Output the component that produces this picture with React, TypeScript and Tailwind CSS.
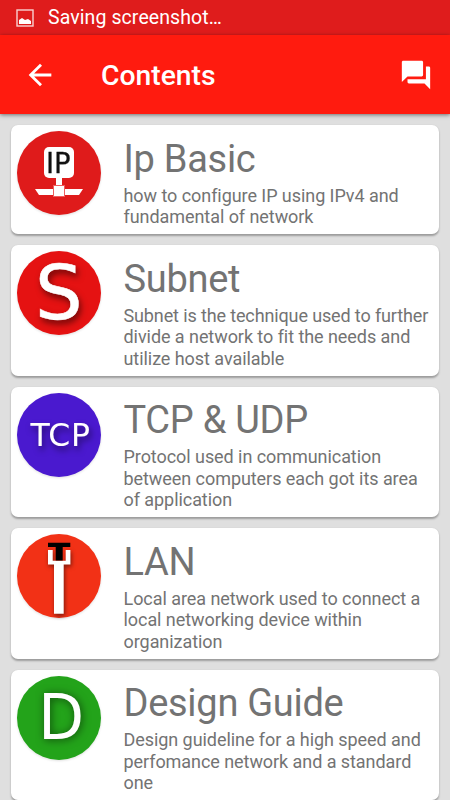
import type { ReactNode } from "react";

function Disc({ color, children }: { color: string; children: ReactNode }) {
  return (
    <svg viewBox="0 0 84 84" className="h-[84px] w-[84px] shrink-0 overflow-visible drop-shadow-[0_1px_1px_rgba(0,0,0,0.12)]">
      <circle cx="42" cy="42" r="42" fill={color} />
      {children}
    </svg>
  );
}

const letterShadow = "[filter:drop-shadow(2px_4px_3px_rgba(0,0,0,0.5))]";

const topics = [
  {
    title: "Ip Basic",
    lines: ["how to configure IP using IPv4 and", "fundamental of network"],
    icon: (
      <Disc color="#df1b1b">
        <rect x="27" y="16" width="30" height="31" rx="5" fill="#fff" />
        <rect x="39" y="46" width="6" height="10" fill="#fff" />
        <path d="M18 58h48l-4 6H22z" fill="#fff" />
        <rect x="36.5" y="54.5" width="11" height="11" fill="#fff" stroke="#ee5f5f" strokeWidth="1" />
        <text x="29" y="42" fontSize="27.5" fill="#111" stroke="#111" strokeWidth=".3" className="font-['DejaVu_Sans',sans-serif]">IP</text>
      </Disc>
    ),
  },
  {
    title: "Subnet",
    lines: ["Subnet is the technique used to further", "divide a network to fit the needs and", "utilize host available"],
    icon: (
      <Disc color="#e51212">
        <g className={letterShadow}>
          <text x="18" y="67.7" fontSize="75" fill="#fff" stroke="#fff" strokeWidth=".5" className="font-['DejaVu_Sans',sans-serif]">S</text>
        </g>
      </Disc>
    ),
  },
  {
    title: "TCP & UDP",
    lines: ["Protocol used in communication", "between computers each got its area", "of application"],
    icon: (
      <Disc color="#4a19cf">
        <g className={letterShadow}>
          <text x="13.4" y="53" fontSize="31.5" textLength="59.5" fill="#fff" className="font-['DejaVu_Sans',sans-serif]">TCP</text>
        </g>
      </Disc>
    ),
  },
  {
    title: "LAN",
    lines: ["Local area network used to connect a", "local networking device within", "organization"],
    icon: (
      <Disc color="#f23116">
        <g className="[filter:drop-shadow(1px_2px_2px_rgba(0,0,0,0.5))]">
          <path d="M31 16h4.7v10.8h13V16h4.7v14.4h-6.7v49.3H37V30.4h-6z" fill="#fff" />
        </g>
        <path d="M31 8.8h22.3v4.2h-7.6v13.4h-7V13H31z" fill="#000" />
      </Disc>
    ),
  },
  {
    title: "Design Guide",
    lines: ["Design guideline for a high speed and", "perfomance network and a standard", "one"],
    icon: (
      <Disc color="#23a31a">
        <g className="[filter:drop-shadow(1px_1px_4px_rgba(0,0,0,0.55))]">
          <text x="21.2" y="62.5" fontSize="63" textLength="45.8" lengthAdjust="spacingAndGlyphs" fill="#fff" className="font-['DejaVu_Sans',sans-serif]">D</text>
        </g>
      </Disc>
    ),
  },
];

export default function App() {
  return (
    <div className="flex h-[800px] w-[450px] flex-col overflow-hidden bg-[#dfdfdf] font-[Roboto,sans-serif]">
      <div className="flex h-[35px] shrink-0 items-center bg-[#df1c1c] pl-4 text-white">
        <svg viewBox="0 0 18 18" className="h-[18px] w-[18px]">
          <rect x="1" y="1" width="16" height="16" fill="none" stroke="#fff" strokeOpacity=".8" strokeWidth="1.4" />
          <path d="M3 15v-4l3-2 3 2 3-1 3 2v3z" fill="#fff" />
        </svg>
        <span className="ml-[14px] text-[19.5px] leading-[34px] tracking-[0.09px]">Saving screenshot…</span>
      </div>
      <header className="relative flex h-[79px] shrink-0 items-center bg-[#ff1b0f] text-white shadow-[0_1px_4px_rgba(0,0,0,0.5)]">
        <svg viewBox="0 0 24 24" className="ml-[23px] h-[34px] w-[34px]" fill="#fff">
          <path d="M20 11H7.83l5.59-5.59L12 4l-8 8 8 8 1.41-1.41L7.83 13H20v-2z" />
        </svg>
        <h1 className="ml-[44px] pt-[3px] text-[28.3px] leading-8 font-medium">Contents</h1>
        <svg viewBox="0 0 24 24" className="mr-[17px] ml-auto h-[34px] w-[34px]" fill="#fff">
          <path d="M21 6h-2v9H6v2c0 .55.45 1 1 1h11l4 4V7c0-.55-.45-1-1-1zm-4 6V3c0-.55-.45-1-1-1H3c-.55 0-1 .45-1 1v14l4-4h10c.55 0 1-.45 1-1z" />
        </svg>
      </header>
      <main className="flex flex-col gap-[11px] pt-[11.2px] pr-[11.5px] pl-[11px]">
        {topics.map((t) => (
          <article key={t.title} className="flex shrink-0 rounded-[7px] bg-white pt-[6px] pb-[6.5px] pl-[6px] shadow-[0_1.5px_2px_rgba(0,0,0,0.3)]">
            {t.icon}
            <div className="ml-[22.5px] whitespace-nowrap text-[#737373]">
              <h2 className="mt-[3.5px] h-[50px] text-[38px] leading-[49px] tracking-[-0.28px]">{t.title}</h2>
              {t.lines.map((l) => (
                <p key={l} className={`text-[18px] leading-[21.5px] ${l.length > 38 ? "tracking-[-0.13px]" : "tracking-[-0.06px]"}`}>{l}</p>
              ))}
            </div>
          </article>
        ))}
      </main>
    </div>
  );
}
